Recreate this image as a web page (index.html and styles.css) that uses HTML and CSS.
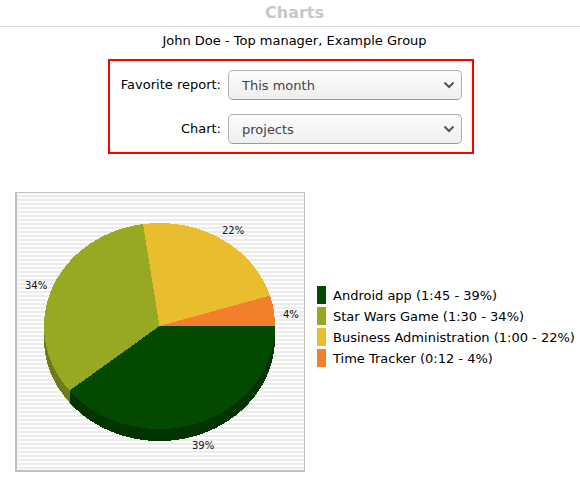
FILE: index.html
```html
<!DOCTYPE html>
<html lang="en">
<head>
  <meta charset="UTF-8">
  <title>Charts</title>
  <link rel="stylesheet" href="styles.css">
</head>
<body>
  <div class="page">
    <h1 class="page-title">Charts</h1>
    <p class="user-line">John Doe - Top manager, Example Group</p>

    <!-- Filters -->
    <form class="filter-box">
      <div class="filter-row">
        <label class="filter-label" for="report">Favorite report:</label>
        <div class="select-wrap">
          <select id="report" class="filter-select"><option>This month</option></select>
          <svg class="select-arrow" width="12" height="8" viewBox="0 0 12 8"><path d="M1.5 1.5 6 6l4.500-4.500" fill="none" stroke="#555" stroke-width="2"/></svg>
        </div>
      </div>
      <div class="filter-row">
        <label class="filter-label" for="chart">Chart:</label>
        <div class="select-wrap">
          <select id="chart" class="filter-select"><option>projects</option></select>
          <svg class="select-arrow" width="12" height="8" viewBox="0 0 12 8"><path d="M1.5 1.5 6 6l4.500-4.500" fill="none" stroke="#555" stroke-width="2"/></svg>
        </div>
      </div>
    </form>

    <!-- Chart and legend -->
    <div class="chart-section">
      <div class="chart-frame">
        <svg class="pie" width="287" height="277" viewBox="0 0 287 277">
          <g shape-rendering="crispEdges" transform="translate(0 2)">
            <!-- side of the pie, running under the top face -->
            <path d="M142.500 131H27V143A115.500 103 0 0 0 52.500 207.600V195.600Z" fill="#6e7a1c"/>
            <path d="M142.500 131 52.500 195.600V207.600A115.500 103 0 0 0 258 143V131Z" fill="#023300"/>
            <!-- top of the pie -->
            <path d="M142.500 131H258A115.500 103 0 0 1 52.500 195.600Z" fill="#034a00"/>
            <path d="M142.500 131 52.500 195.600A115.500 103 0 0 1 126 29.100Z" fill="#97a823"/>
            <path d="M142.500 131 126 29.100A115.500 103 0 0 1 253 100.600Z" fill="#e9bd2e"/>
            <path d="M142.500 131 253 100.600A115.500 103 0 0 1 258 131Z" fill="#f2802a"/>
          </g>
          <text class="pie-label" x="205" y="41">22%</text>
          <text class="pie-label" x="8" y="96">34%</text>
          <text class="pie-label" x="266" y="125">4%</text>
          <text class="pie-label" x="175" y="256">39%</text>
        </svg>
      </div>
      <ul class="legend">
        <li class="legend-item"><span class="swatch swatch-android"></span>Android app (1:45 - 39%)</li>
        <li class="legend-item"><span class="swatch swatch-starwars"></span>Star Wars Game (1:30 - 34%)</li>
        <li class="legend-item"><span class="swatch swatch-business"></span>Business Administration (1:00 - 22%)</li>
        <li class="legend-item"><span class="swatch swatch-tracker"></span>Time Tracker (0:12 - 4%)</li>
      </ul>
    </div>
  </div>
</body>
</html>
```

FILE: styles.css
```css
html, body {
  margin: 0;
  overflow: hidden;
  background: #fff;
}

body {
  font-family: "DejaVu Sans", sans-serif;
  font-size: 13px;
  color: #000;
}

.page {
  width: 589px;
}

.page-title {
  margin: 0;
  height: 26px;
  line-height: 26px;
  font-size: 16px;
  font-weight: bold;
  text-align: center;
  color: #c8c8c8;
  border-bottom: 1px solid #d8d8d8;
}

.user-line {
  margin: 0;
  height: 32px;
  line-height: 28px;
  text-align: center;
}

.filter-box {
  box-sizing: border-box;
  width: 366px;
  height: 95px;
  margin-left: 108px;
  padding: 9px 10px 0 10px;
  border: 2px solid #f00;
}

.filter-row {
  display: flex;
  justify-content: flex-end;
  align-items: center;
  gap: 7px;
  margin-bottom: 14px;
}

.filter-label {
  line-height: 30px;
  white-space: nowrap;
}

.select-wrap {
  position: relative;
  flex: none;
  width: 234px;
  height: 30px;
}

.filter-select {
  appearance: none;
  box-sizing: border-box;
  width: 100%;
  height: 100%;
  margin: 0;
  padding: 0 24px 0 13px;
  font-family: inherit;
  font-size: 13px;
  color: #444;
  background: linear-gradient(to bottom, #fcfcfc, #eeeeee);
  border: 1px solid #b0b0b0;
  border-bottom-color: #999;
  border-radius: 5px;
}

.select-arrow {
  position: absolute;
  top: 11px;
  right: 7px;
}

.chart-section {
  display: flex;
  align-items: flex-start;
  margin-top: 38px;
  margin-left: 15px;
}

.chart-frame {
  width: 287px;
  height: 277px;
  border: 2px solid #c0c0c0;
  border-top-width: 1px;
  border-right-width: 1px;
  background: repeating-linear-gradient(to bottom, #fcfcfc 0, #fcfcfc 2px, #ececec 2px, #ececec 4px);
}

.pie {
  display: block;
}

.pie-label {
  font-size: 10px;
  fill: #111;
}

.legend {
  list-style: none;
  margin: 94px 0 0 12px;
  padding: 0;
}

.legend-item {
  display: flex;
  align-items: center;
  height: 18px;
  margin-bottom: 3px;
  white-space: nowrap;
}

.swatch {
  width: 9px;
  height: 18px;
  margin-right: 7px;
}

.swatch-android { background: #034a00; }
.swatch-starwars { background: #97a823; }
.swatch-business { background: #e9bd2e; }
.swatch-tracker { background: #f2802a; }
```
